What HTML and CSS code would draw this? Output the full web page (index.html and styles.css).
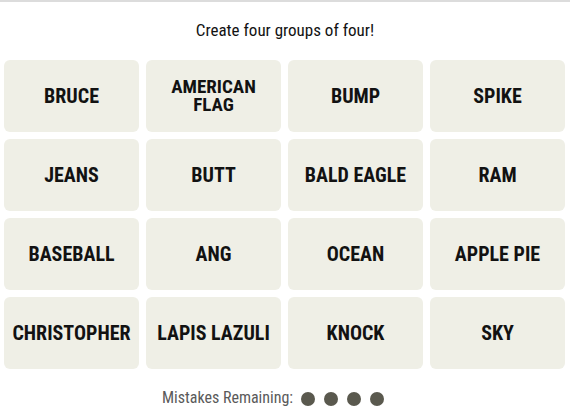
FILE: index.html
```html
<!DOCTYPE html>
<html>
<head>
<meta charset="utf-8">
<link rel="stylesheet" href="styles.css">
</head>
<body>
<div class="page">
  <p class="prompt">Create four groups of four!</p>
  <div class="board">
    <div class="tile">BRUCE</div>
    <div class="tile tile-small">AMERICAN FLAG</div>
    <div class="tile">BUMP</div>
    <div class="tile">SPIKE</div>
    <div class="tile">JEANS</div>
    <div class="tile">BUTT</div>
    <div class="tile">BALD EAGLE</div>
    <div class="tile">RAM</div>
    <div class="tile">BASEBALL</div>
    <div class="tile">ANG</div>
    <div class="tile">OCEAN</div>
    <div class="tile">APPLE PIE</div>
    <div class="tile">CHRISTOPHER</div>
    <div class="tile">LAPIS LAZULI</div>
    <div class="tile">KNOCK</div>
    <div class="tile">SKY</div>
  </div>
  <div class="mistakes">
    <span class="mistakes-label">Mistakes Remaining:</span>
    <span class="dots"><span class="dot"></span><span class="dot"></span><span class="dot"></span><span class="dot"></span></span>
  </div>
</div>
</body>
</html>
```
FILE: styles.css
```css
html, body {
  margin: 0;
  padding: 0;
  background: #fff;
}
.page {
  border-top: 2px solid #dcdcdc;
  width: 570px;
  height: 412px;
  font-family: Roboto, "Liberation Sans", Arial, sans-serif;
  font-stretch: condensed;
  color: #000;
}
.prompt {
  margin: 0;
  padding-top: 19px;
  height: 58px;
  box-sizing: border-box;
  text-align: center;
  font-size: 17px;
  line-height: 18px;
  color: #121212;
}
.board {
  margin-left: 4px;
  width: 561px;
  display: grid;
  grid-template-columns: repeat(4, 135px);
  grid-auto-rows: 72px;
  column-gap: 7px;
  row-gap: 7px;
}
.tile {
  background: #efefe6;
  border-radius: 6px;
  display: flex;
  align-items: center;
  justify-content: center;
  text-align: center;
  font-weight: 700;
  font-size: 20px;
  line-height: 20px;
  padding: 0 4px;
  box-sizing: border-box;
  color: #121212;
}
.tile-small {
  font-size: 19px;
  line-height: 18px;
  padding: 0 16px;
}
.mistakes {
  display: flex;
  justify-content: center;
  align-items: center;
  margin-top: 22px;
  height: 16px;
  gap: 8px;
  padding-right: 24px;
}
.mistakes-label {
  font-size: 16px;
  line-height: 16px;
  color: #5a5a5a;
  padding-bottom: 3px;
}
.dots {
  display: flex;
  gap: 9px;
}
.dot {
  width: 14px;
  height: 14px;
  border-radius: 50%;
  background: #5a594e;
}
```
